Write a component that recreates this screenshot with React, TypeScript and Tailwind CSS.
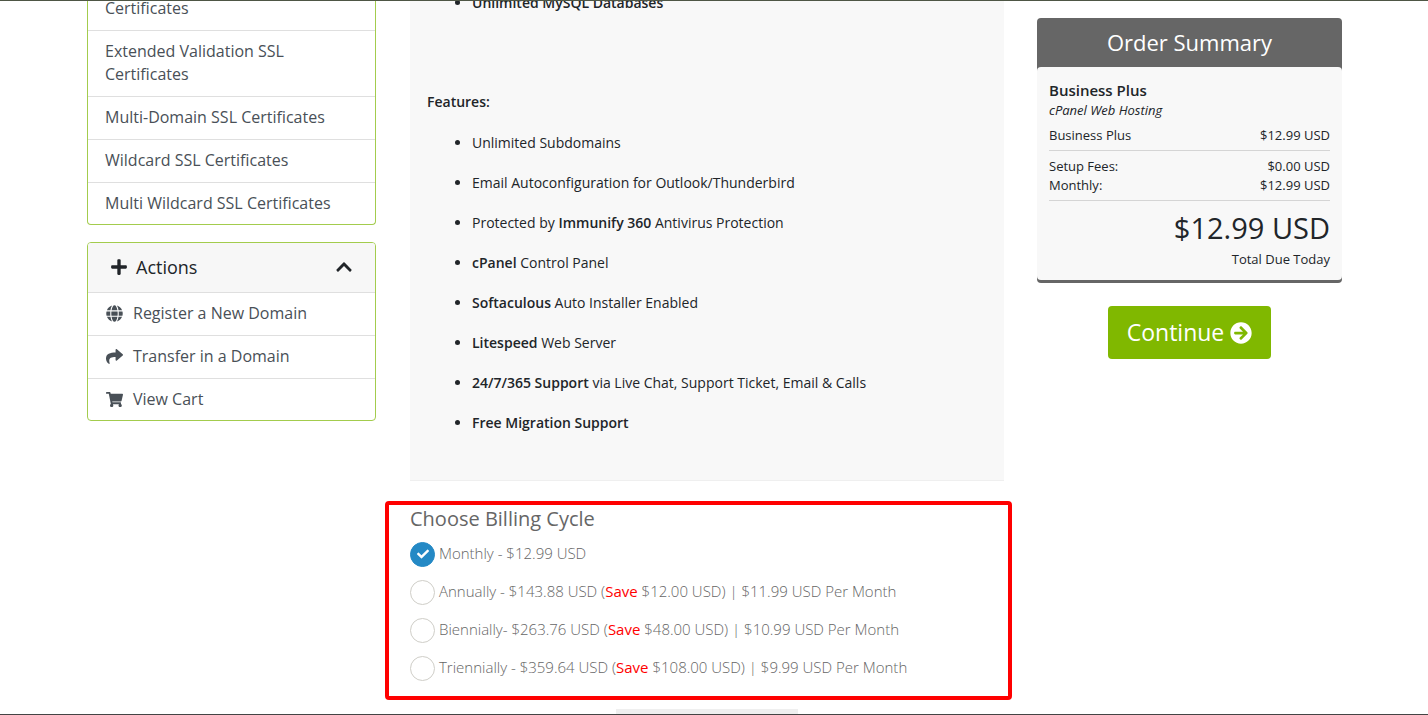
import {useState} from "react";
import {FaArrowCircleRight, FaCheck, FaChevronUp, FaGlobe, FaPlus, FaShare, FaShoppingCart} from "react-icons/fa";

const certificateLinks = [
    "Extended Validation SSL Certificates",
    "Multi-Domain SSL Certificates",
    "Wildcard SSL Certificates",
    "Multi Wildcard SSL Certificates",
];

const actionLinks = [
    {label: "Register a New Domain", icon: FaGlobe},
    {label: "Transfer in a Domain", icon: FaShare},
    {label: "View Cart", icon: FaShoppingCart},
];

const features = [
    {before: "Unlimited Subdomains", strong: "", after: ""},
    {before: "Email Autoconfiguration for Outlook/Thunderbird", strong: "", after: ""},
    {before: "Protected by ", strong: "Immunify 360", after: " Antivirus Protection"},
    {before: "", strong: "cPanel", after: " Control Panel"},
    {before: "", strong: "Softaculous", after: " Auto Installer Enabled"},
    {before: "", strong: "Litespeed", after: " Web Server"},
    {before: "", strong: "24/7/365 Support", after: " via Live Chat, Support Ticket, Email & Calls"},
    {before: "", strong: "Free Migration Support", after: ""},
];

const billingCycles = [
    {id: "monthly", price: "Monthly - $12.99 USD", saving: ""},
    {id: "annually", price: "Annually - $143.88 USD", saving: "$12.00 USD) | $11.99 USD Per Month"},
    {id: "biennially", price: "Biennially- $263.76 USD", saving: "$48.00 USD) | $10.99 USD Per Month"},
    {id: "triennially", price: "Triennially - $359.64 USD", saving: "$108.00 USD) | $9.99 USD Per Month"},
];

const Sidebar = () => (
    <aside className="w-[289px] shrink-0 text-base leading-[23px] text-[#495057]">
        <nav className="border border-t-0 border-[#a3cc4d] rounded-b bg-white">
            <a href="#" className="block -mt-1 px-[17px] pb-[10px]">Certificates</a>
            {certificateLinks.map((label) => (
                <a key={label} href="#" className="block border-t border-[#dfdfdf] pl-[17px] pr-10 pt-[9px] pb-[10px] last:pb-[9px]">
                    {label}
                </a>
            ))}
        </nav>

        <nav className="mt-[17px] border border-[#a3cc4d] rounded bg-white overflow-hidden">
            <button type="button" className="flex w-full items-center bg-[#f7f7f7] h-[49px] px-[22px] pb-px text-lg text-[#212529]">
                <FaPlus className="size-[18px] mr-2"/>
                Actions
                <FaChevronUp className="size-[18px] ml-auto"/>
            </button>
            {actionLinks.map(({label, icon: Icon}) => (
                <a key={label} href="#" className="flex items-center border-t border-[#dfdfdf] px-[18px] pt-[9px] pb-[10px] last:pb-[9px]">
                    <Icon className="size-[17px] mr-[10px]"/>
                    {label}
                </a>
            ))}
        </nav>
    </aside>
);

const ProductInfo = () => (
    <section className="ml-[25px] mr-2 bg-[#f8f8f8] border-b border-[#efefef] px-[17px] pb-[47px] text-sm leading-5">
        <ul className="-mt-2 pl-[45px] list-disc font-semibold">
            <li>Unlimited MySQL Databases</li>
        </ul>
        <p className="mt-[79px] font-semibold">Features:</p>
        <ul className="mt-[21px] pl-[45px] list-disc space-y-5">
            {features.map(({before, strong, after}) => (
                <li key={before + strong}>
                    {before}<strong className="font-semibold">{strong}</strong>{after}
                </li>
            ))}
        </ul>
    </section>
);

const BillingCycle = () => {
    const [selected, setSelected] = useState("monthly");

    return (
        <fieldset className="mt-5 border-4 border-[#ff0000] rounded-sm pl-[21px] pb-[9px]">
            <h2 className="text-xl leading-7 text-[#666]">Choose Billing Cycle</h2>
            <div className="mt-[2px]">
                {billingCycles.map(({id, price, saving}) => (
                    <label key={id} htmlFor={id} className="flex h-[38px] items-center text-[15px] font-light text-[#666]">
                        <span className="grid size-[25px] mr-1 place-items-center">
                            <input
                                type="radio"
                                id={id}
                                name="billingCycle"
                                checked={selected === id}
                                onChange={() => setSelected(id)}
                                className="col-start-1 row-start-1 size-[25px] appearance-none rounded-full border border-[#cfcec8] bg-white checked:border-[#2489c5] checked:bg-[#2489c5]"
                            />
                            {selected === id && (
                                <FaCheck className="col-start-1 row-start-1 z-10 size-3 text-white pointer-events-none"/>
                            )}
                        </span>
                        <span className="pb-[2px]">
                            {price}
                            {saving && (<> (<span className="font-normal text-[#ff0000]">Save</span> {saving}</>)}
                        </span>
                    </label>
                ))}
            </div>
        </fieldset>
    );
};

const SummaryRow = ({label, value}: { label: string, value: string }) => (
    <div className="flex justify-between">
        <span>{label}</span>
        <span>{value}</span>
    </div>
);

const OrderSummary = () => (
    <aside className="w-[305px] shrink-0 ml-[25px] pt-[17px]">
        <div className="rounded bg-[#666] pb-[3px]">
            <h2 className="h-[49px] text-center text-[22px] leading-[48px] text-white">Order Summary</h2>
            <div className="rounded bg-[#f8f8f8] px-3 pt-3 pb-[11px] text-[13px] leading-[19px]">
                <p className="text-[15px] leading-[22px] font-semibold">Business Plus</p>
                <p className="italic">cPanel Web Hosting</p>
                <div className="mt-[6px] pb-[5px]">
                    <SummaryRow label="Business Plus" value="$12.99 USD"/>
                </div>
                <div className="border-y border-[#d5d5d5] pt-[6px] pb-[5px]">
                    <SummaryRow label="Setup Fees:" value="$0.00 USD"/>
                    <SummaryRow label="Monthly:" value="$12.99 USD"/>
                </div>
                <p className="pt-[7px] text-right text-[29px] leading-10">$12.99 USD</p>
                <p className="mt-[2px] text-right">Total Due Today</p>
            </div>
        </div>
        <div className="mt-[23px] text-center">
            <button type="button" className="inline-flex items-center gap-[6px] h-[53px] px-[19px] rounded bg-[#80b800] text-[23px] text-white">
                Continue
                <FaArrowCircleRight className="size-[22px]"/>
            </button>
        </div>
    </aside>
);

const App = () => {
    return (
        <div className="flex flex-col h-screen overflow-hidden border-y border-t-[#4e5645] border-b-[#444] bg-white font-['Open_Sans',sans-serif] text-[#212529]">
            <div className="flex flex-1 min-h-0 pl-[87px] pr-[86px]">
                <Sidebar/>
                <main className="flex-1 min-w-0 ml-[9px]">
                    <ProductInfo/>
                    <BillingCycle/>
                    <div className="mx-auto mt-[9px] h-10 w-[182px] translate-x-2 bg-[#efefef]"/>
                </main>
                <OrderSummary/>
            </div>
        </div>
    );
};

export default App;
